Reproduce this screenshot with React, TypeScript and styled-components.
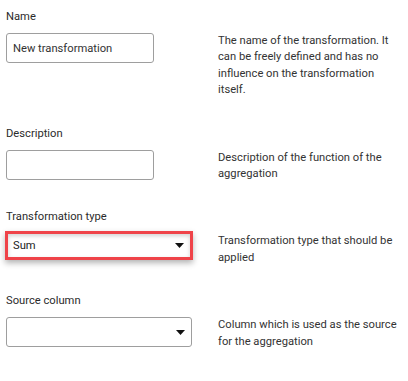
import React from "react";
import styled, { createGlobalStyle } from "styled-components";

const GlobalStyle = createGlobalStyle`
  body {
    margin: 0;
    background: #ffffff;
    font-family: Roboto, "Liberation Sans", Arial, sans-serif;
  }
`;

const Form = styled.div`
  padding: 9px 8px 0 6px;
  width: 408px;
  box-sizing: border-box;
`;

const Section = styled.div`
  margin-bottom: 27px;
`;

const Label = styled.div`
  font-size: 11.2px;
  line-height: 16px;
  color: #2b2b2b;
  margin-bottom: 8px;
`;

const Row = styled.div`
  display: grid;
  grid-template-columns: 186px 182px;
  column-gap: 26px;
  align-items: start;
`;

const TextInput = styled.div`
  width: 148px;
  height: 30px;
  box-sizing: border-box;
  border: 1px solid #9e9e9e;
  border-radius: 3px;
  padding: 0 6px;
  display: flex;
  align-items: center;
  font-size: 11.2px;
  color: #333;
`;

const Select = styled.div<{ $highlight?: boolean }>`
  height: ${(p) => (p.$highlight ? "29px" : "30px")};
  box-sizing: border-box;
  border: ${(p) => (p.$highlight ? "3px solid #ef4349" : "1px solid #9e9e9e")};
  border-radius: ${(p) => (p.$highlight ? "0" : "3px")};
  box-shadow: ${(p) =>
    p.$highlight
      ? "0 3px 6px rgba(0,0,0,0.3), inset 0 2px 4px rgba(0,0,0,0.18)"
      : "none"};
  margin: ${(p) => (p.$highlight ? "-2px 0 0 -1px" : "0")};
  width: ${(p) => (p.$highlight ? "188px" : "186px")};
  padding: 0 6px 0 5px;
  display: flex;
  align-items: center;
  justify-content: space-between;
  font-size: 11.2px;
  color: #222;
`;

const Help = styled.div`
  font-size: 11.2px;
  line-height: 16.4px;
  color: #333;
`;

const Arrow = () => (
  <svg width="9" height="5" viewBox="0 0 9 5">
    <path d="M0 0 L9 0 L4.5 5 Z" fill="#111" />
  </svg>
);

export default function App() {
  return (
    <>
      <GlobalStyle />
      <Form>
        <Section>
          <Label>Name</Label>
          <Row>
            <TextInput>New transformation</TextInput>
            <Help>
              The name of the transformation. It can be freely defined and has
              no influence on the transformation itself.
            </Help>
          </Row>
        </Section>
        <Section>
          <Label>Description</Label>
          <Row>
            <TextInput />
            <Help>Description of the function of the aggregation</Help>
          </Row>
        </Section>
        <Section>
          <Label>Transformation type</Label>
          <Row>
            <Select $highlight>
              <span>Sum</span>
              <Arrow />
            </Select>
            <Help>Transformation type that should be applied</Help>
          </Row>
        </Section>
        <Section>
          <Label>Source column</Label>
          <Row>
            <Select>
              <span />
              <Arrow />
            </Select>
            <Help>Column which is used as the source for the aggregation</Help>
          </Row>
        </Section>
      </Form>
    </>
  );
}
